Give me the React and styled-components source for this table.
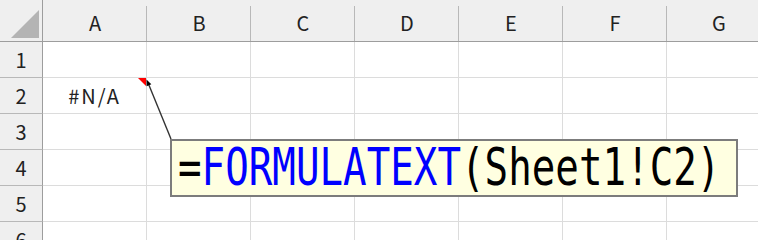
import React from 'react';
import styled, { createGlobalStyle } from 'styled-components';

const GlobalStyle = createGlobalStyle`
  html, body {
    margin: 0;
    padding: 0;
    background: #ffffff;
    overflow: hidden;
  }
`;

const columns = ['A', 'B', 'C', 'D', 'E', 'F', 'G'];
const rows = [1, 2, 3, 4, 5, 6];

// cell contents keyed by address
const values = { A2: '#N/A' };
const comments = { A2: true };

const Sheet = styled.div`
  position: relative;
  width: 758px;
  height: 240px;
  overflow: hidden;
  font-family: 'Noto Sans CJK JP', 'Noto Sans', sans-serif;
`;

const Grid = styled.div`
  display: grid;
  grid-template-columns: 43px repeat(7, 104px);
  grid-template-rows: 42px repeat(6, 36px);
`;

const Corner = styled.div`
  box-sizing: border-box;
  position: relative;
  background: #efefef;
  border-right: 1px solid #9d9d9d;
  border-bottom: 1px solid #9d9d9d;

  &::after {
    content: '';
    position: absolute;
    right: 3px;
    bottom: 3px;
    width: 0;
    height: 0;
    border-left: 28px solid transparent;
    border-bottom: 28px solid #b4b4b4;
  }
`;

const ColHeader = styled.div`
  box-sizing: border-box;
  position: relative;
  display: flex;
  align-items: center;
  justify-content: center;
  padding-top: 4px;
  background: #efefef;
  border-bottom: 1px solid #9d9d9d;
  font-size: 20px;
  color: #222;

  &::after {
    content: '';
    position: absolute;
    right: 0;
    top: 6px;
    bottom: 0;
    width: 1px;
    background: #b8b8b8;
  }
`;

const RowHeader = styled.div`
  box-sizing: border-box;
  display: flex;
  align-items: center;
  justify-content: center;
  background: #efefef;
  border-right: 1px solid #9d9d9d;
  border-bottom: 1px solid #b8b8b8;
  font-size: 20px;
  color: #222;
`;

const Cell = styled.div`
  box-sizing: border-box;
  position: relative;
  display: flex;
  align-items: center;
  justify-content: center;
  border-right: 1px solid #dcdcdc;
  border-bottom: 1px solid #dcdcdc;
  font-size: 20px;
  letter-spacing: 2px;
  color: #222;

  ${({ $comment }) =>
    $comment &&
    `
    &::after {
      content: '';
      position: absolute;
      top: 0;
      right: 0;
      width: 0;
      height: 0;
      border-left: 8px solid transparent;
      border-top: 8px solid #ff0000;
    }
  `}
`;

const Callout = styled.svg`
  position: absolute;
  left: 0;
  top: 0;
  pointer-events: none;
`;

const Note = styled.div`
  position: absolute;
  left: 170px;
  top: 139px;
  width: 568px;
  height: 58px;
  box-sizing: border-box;
  display: flex;
  align-items: center;
  padding-left: 6px;
  background: #ffffe1;
  border: 2px solid #7c7c7c;
  overflow: hidden;
`;

const NoteText = styled.span`
  display: inline-block;
  white-space: nowrap;
  font-family: 'DejaVu Sans Mono', 'Liberation Mono', monospace;
  font-size: 51px;
  line-height: 54px;
  color: #000;
  transform: scaleX(0.768);
  transform-origin: left center;
`;

const Fn = styled.span`
  color: #0000ff;
`;

export default function App() {
  return (
    <Sheet>
      <GlobalStyle />
      <Grid>
        <Corner />
        {columns.map((c) => (
          <ColHeader key={c}>{c}</ColHeader>
        ))}
        {rows.map((r) => (
          <React.Fragment key={r}>
            <RowHeader>{r}</RowHeader>
            {columns.map((c) => (
              <Cell key={c + r} $comment={comments[c + r]}>
                {values[c + r]}
              </Cell>
            ))}
          </React.Fragment>
        ))}
      </Grid>

      <Callout width="758" height="240" viewBox="0 0 758 240">
        <line x1="171" y1="139" x2="148.5" y2="84" stroke="#333" strokeWidth="1.4" />
        <polygon points="146.5,79.5 151.3,84.2 146.6,86.2" fill="#000" />
      </Callout>

      <Note>
        <NoteText>
          =<Fn>FORMULATEXT</Fn>(Sheet1!C2)
        </NoteText>
      </Note>
    </Sheet>
  );
}
